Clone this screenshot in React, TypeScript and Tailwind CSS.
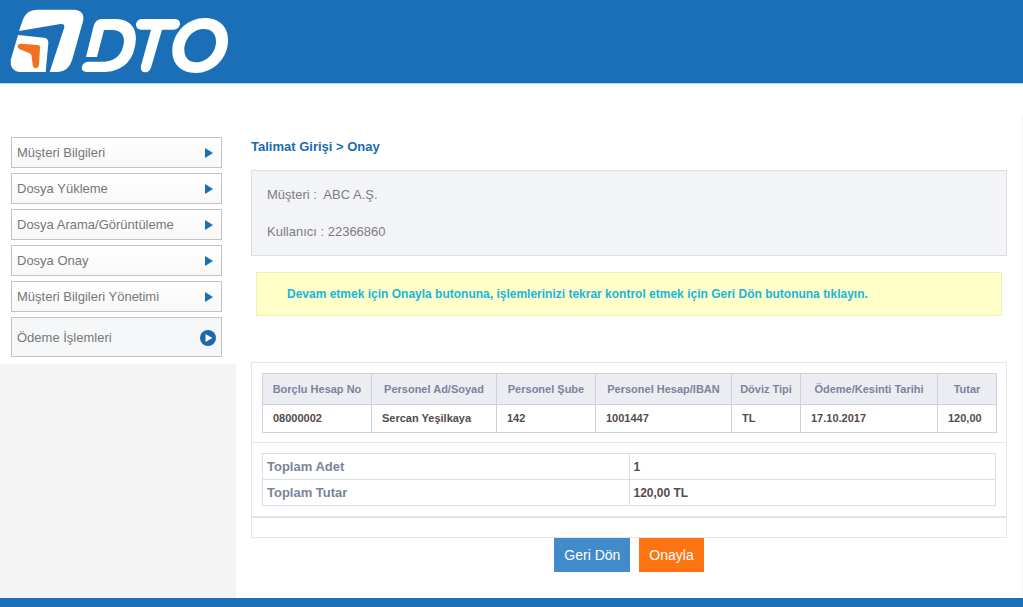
import React from "react";

const menuItems = [
  "Müşteri Bilgileri",
  "Dosya Yükleme",
  "Dosya Arama/Görüntüleme",
  "Dosya Onay",
  "Müşteri Bilgileri Yönetimi",
];

const columns = [
  { title: "Borçlu Hesap No", value: "08000002", width: "w-[109px]" },
  { title: "Personel Ad/Soyad", value: "Sercan Yeşilkaya", width: "w-[125px]" },
  { title: "Personel Şube", value: "142", width: "w-[99px]" },
  { title: "Personel Hesap/IBAN", value: "1001447", width: "w-[136px]" },
  { title: "Döviz Tipi", value: "TL", width: "w-[69px]" },
  { title: "Ödeme/Kesinti Tarihi", value: "17.10.2017", width: "w-[137px]" },
  { title: "Tutar", value: "120,00", width: "w-[59px]" },
];

const totals = [
  { label: "Toplam Adet", value: "1" },
  { label: "Toplam Tutar", value: "120,00 TL" },
];

function Logo() {
  return (
    <svg viewBox="0 0 720 249" className="h-[83px] w-60" role="img" aria-label="DTO">
      <path
        fill="#fff"
        d="M57 93 L69 58 Q79 30 111 29 L221 29 Q256 31 249 64 L217 178 Q206 215 174 216 L149 216 L193 82 Q195 71 181 72 Z"
      />
      <path
        fill="#fff"
        d="M54 105 L132 113 Q146 115 145 130 L137 216 L57 216 Q29 211 32 181 Z"
      />
      <path
        fill="#f37021"
        d="M62 131 L114 135 Q121 136 120 143 L117 194 Q115 204 107 204 Q99 204 98 195 L95 168 Q94 161 87 159 L59 148 Q52 144 53 138 Q55 131 62 131 Z"
      />
      <path
        fill="#fff"
        d="M258 171 L281 78 Q287 57 306 57 L349 57 Q407 60 408 116 Q402 210 315 216 L260 216 Q242 215 246 199 Q250 185 267 185 L314 185 Q365 181 372 126 Q373 93 341 90 L312 90 L291 171 Z"
      />
      <path
        fill="#fff"
        d="M424 57 L526 57 Q540 58 540 72 Q538 87 522 89 L486 89 L453 203 Q447 217 435 217 Q419 214 423 197 L453 89 L422 89 Q407 87 408 73 Q411 58 424 57 Z"
      />
      <path
        fill="#fff"
        fillRule="evenodd"
        d="M614 54 C661 54 687 84 684 126 C681 178 638 219 587 219 C541 219 515 190 517 148 C520 95 564 54 614 54 Z M608 87 C575 89 553 120 553 150 C553 173 567 187 589 187 C624 186 649 154 648 123 C648 100 633 86 608 87 Z"
      />
    </svg>
  );
}

function Arrow() {
  return (
    <svg viewBox="0 0 8 10" className="mr-2 h-[10px] w-2" aria-hidden="true">
      <path d="M0 0 L8 5 L0 10 Z" fill="#1c6eb5" />
    </svg>
  );
}

function CircleArrow() {
  return (
    <svg viewBox="0 0 16 16" className="mr-[5px] size-4" aria-hidden="true">
      <circle cx="8" cy="8" r="8" fill="#1b68aa" />
      <path d="M5.5 4 L12.3 8 L5.5 12 Z" fill="#fff" />
    </svg>
  );
}

function Sidebar() {
  return (
    <aside className="flex w-[236px] shrink-0 flex-col bg-[#f4f4f4]">
      <nav className="bg-white pt-[53px] pr-[14px] pb-[7px] pl-[11px]">
        <ul className="flex flex-col gap-[5px] text-[13px] text-[#777]">
          {menuItems.map((item) => (
            <li key={item}>
              <a
                href="#"
                className="flex h-[31px] items-center justify-between border border-[#c3c3c5] bg-linear-to-b from-white to-[#f8f8f8] pt-px pl-[5px]"
              >
                {item}
                <Arrow />
              </a>
            </li>
          ))}
          <li>
            <a
              href="#"
              aria-current="page"
              className="flex h-10 items-center justify-between border border-[#c3c3c5] bg-[#f6f7f9] pt-px pl-[5px]"
            >
              Ödeme İşlemleri
              <CircleArrow />
            </a>
          </li>
        </ul>
      </nav>
    </aside>
  );
}

function PaymentTable() {
  return (
    <table className="w-full table-fixed border-collapse text-[11px] font-bold">
      <thead>
        <tr className="h-[31px] bg-[#ecedf2] text-[#7d839b]">
          {columns.map((c) => (
            <th key={c.title} className={`${c.width} border border-[#d0d1de] p-0 whitespace-nowrap`}>
              {c.title}
            </th>
          ))}
        </tr>
      </thead>
      <tbody>
        <tr className="h-7 text-[#544c4c]">
          {columns.map((c) => (
            <td key={c.title} className="border border-[#d0d1de] p-0 pl-[10px] whitespace-nowrap">
              {c.value}
            </td>
          ))}
        </tr>
      </tbody>
    </table>
  );
}

function TotalsTable() {
  return (
    <table className="w-full table-fixed border-collapse text-left font-bold">
      <tbody>
        {totals.map((t) => (
          <tr key={t.label} className="h-[26px]">
            <th className="w-1/2 border border-[#dcdde6] p-0 pl-1 text-[13px] text-[#7d839b]">{t.label}</th>
            <td className="w-1/2 border border-[#dcdde6] p-0 pl-1 text-xs text-[#544c4c]">{t.value}</td>
          </tr>
        ))}
      </tbody>
    </table>
  );
}

export default function App() {
  return (
    <div className="flex min-h-screen flex-col bg-white font-['Liberation_Sans',Arial,sans-serif]">
      <header className="border-b border-[#a9d3ee] bg-[#1b6fb6]">
        <Logo />
      </header>

      <div className="flex grow">
        <Sidebar />
        <main className="mt-8 min-w-0 grow border-r border-[#f3f3f3] px-[15px]">
          <h1 className="pt-[21px] text-[13px] leading-5 font-bold text-[#1b6bb0]">Talimat Girişi &gt; Onay</h1>

          <section className="mt-[13px] flex flex-col gap-[17px] border border-[#dedee5] bg-[#f3f4f7] px-[15px] pt-[14px] pb-[13px] text-[13px] leading-5 text-[#7d7d7d]">
            <p>Müşteri :&nbsp; ABC A.Ş.</p>
            <p>Kullanıcı : 22366860</p>
          </section>

          <p className="mx-[5px] mt-4 border border-[#f3efb4] bg-[#ffffc8] px-[30px] py-[11px] text-xs leading-5 font-bold text-[#19b5dc]">
            Devam etmek için Onayla butonuna, işlemlerinizi tekrar kontrol etmek için Geri Dön butonuna tıklayın.
          </p>

          <section className="mt-[46px] border border-[#e6e6ea]">
            <div className="px-[10px] pt-[10px] pb-[9px]">
              <PaymentTable />
            </div>
            <div className="border-t border-[#e6e6ea] p-[10px]">
              <TotalsTable />
            </div>
            <div className="h-[21px] border-t-2 border-[#e2e2e5]" />
          </section>

          <div className="flex justify-center gap-[9px] pb-6">
            <button type="button" className="h-[34px] bg-[#428bca] px-[10px] text-sm text-white">
              Geri Dön
            </button>
            <button type="button" className="h-[34px] bg-[#ff7412] px-[10px] text-sm text-white">
              Onayla
            </button>
          </div>
        </main>
      </div>

      <footer className="h-[9px] bg-[#1b6fb6]" />
    </div>
  );
}
